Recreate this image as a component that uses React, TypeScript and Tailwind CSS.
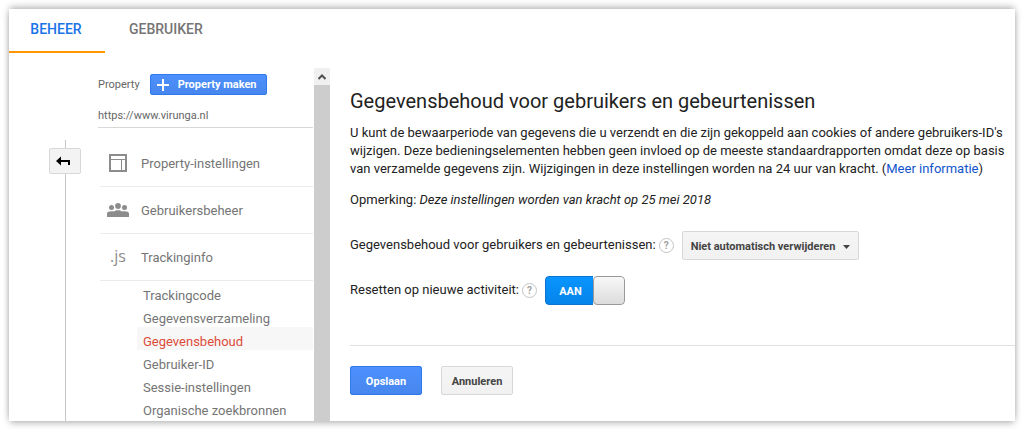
import React, { useState } from 'react';

const subItems = [
  'Trackingcode',
  'Gegevensverzameling',
  'Gegevensbehoud',
  'Gebruiker-ID',
  'Sessie-instellingen',
  'Organische zoekbronnen',
];

function LayoutIcon() {
  return (
    <svg width="18" height="18" viewBox="0 0 18 18" fill="none" stroke="#8c8c8c" aria-hidden="true">
      <rect x="1" y="1" width="16" height="16" strokeWidth="2" />
      <path d="M2 5.5h14M12.5 5.5V16" strokeWidth="1" />
    </svg>
  );
}

function PeopleIcon() {
  return (
    <svg width="22" height="14" viewBox="0 0 22 14" fill="#8c8c8c" aria-hidden="true">
      <circle cx="4.5" cy="4.5" r="2.5" />
      <circle cx="11" cy="3" r="2.9" />
      <circle cx="17.5" cy="4.5" r="2.5" />
      <path d="M0 14v-3.5C0 9 2 8.2 4.5 8.2c1 0 1.900.1 2.600.2C8 7.600 9.400 7.200 11 7.200s3 .4 3.900 1.200c.7-.1 1.600-.2 2.600-.2C20 8.200 22 9 22 10.500V14z" />
    </svg>
  );
}

function Help({ label }: { label: string }) {
  return (
    <button
      type="button"
      aria-label={label}
      className="flex size-[15px] shrink-0 items-center justify-center rounded-full border border-[#c4c4c4] text-[10px] leading-none font-bold text-[#a0a0a0]"
    >
      ?
    </button>
  );
}

function NavItem({ icon, children }: { icon: React.ReactNode; children: React.ReactNode }) {
  return (
    <a href="#" className="ml-0.5 flex h-[47px] items-center border-b border-[#ebebeb] text-[13px] text-[#757575]">
      <span className="flex w-9 justify-center">{icon}</span>
      <span className="ml-[5px] pt-0.5">{children}</span>
    </a>
  );
}

export default function App() {
  const [on, setOn] = useState(true);

  return (
    <div className="flex min-h-screen bg-white pt-[9px] pr-2 pb-2 pl-[9px] font-['Roboto',sans-serif] text-[#222]">
      <div className="flex min-w-0 flex-1 flex-col bg-white shadow-[0_-3px_7px_-1px_rgba(0,0,0,0.28),0_3px_7px_-1px_rgba(0,0,0,0.28)]">
        <nav className="flex h-11 text-sm font-medium">
          <a
            href="#"
            className="flex w-24 items-center justify-center border-b-2 border-[#ff9800] pr-0.5 pb-0.5 text-[#1a73e8]"
          >
            BEHEER
          </a>
          <a href="#" className="flex items-center border-b-2 border-transparent px-6 pb-0.5 text-[#757575]">
            GEBRUIKER
          </a>
        </nav>

        <div className="mt-[15px] flex flex-1">
          <div className="ml-10 flex w-8 shrink-0 flex-col pt-[72px]">
            <div className="ml-4 h-2 w-px bg-[#c6c6c6]" />
            <button
              type="button"
              aria-label="Terug"
              className="flex h-[26px] items-center justify-center rounded-xs border border-[#d8d8d8] bg-[#f3f3f3] pr-1"
            >
              <svg width="14" height="10" viewBox="0 0 14 10" aria-hidden="true">
                <path d="M0 5l5-4.500V4h9v5h-2V6H5v3.500z" fill="#000" />
              </svg>
            </button>
            <div className="ml-4 w-px flex-1 bg-[#c6c6c6]" />
          </div>

          <aside className="ml-[17px] w-[215px] shrink-0">
            <div className="flex items-center gap-2.5 pt-1.5 text-[11px] text-[#666]">
              <span className="pt-0.5">Property</span>
              <button
                type="button"
                className="flex h-[21px] items-center gap-[9px] rounded-xs border border-[#3079ed] bg-linear-to-b from-[#4d90fe] to-[#4787ed] pr-[9px] pl-1.5 font-bold text-white"
              >
                <svg width="12" height="12" viewBox="0 0 12 12" stroke="#fff" strokeWidth="2" aria-hidden="true">
                  <path d="M6 0v12M0 6h12" />
                </svg>
                <span className="pt-0.5">Property maken</span>
              </button>
            </div>
            <div className="mt-2 flex h-[25px] items-center border-b border-[#d8d8d8] pt-0.5 text-[11px] text-[#666]">
              https://www.virunga.nl
            </div>
            <nav className="pt-3">
              <NavItem icon={<LayoutIcon />}>Property-instellingen</NavItem>
              <NavItem icon={<PeopleIcon />}>Gebruikersbeheer</NavItem>
              <NavItem icon={<span className="pb-0.5 font-['Open_Sans',sans-serif] text-base text-[#8c8c8c]">.js</span>}>
                Trackinginfo
              </NavItem>
              <ul className="ml-[39px] text-[13px] leading-[17px]">
                {subItems.map((item) => (
                  <li key={item}>
                    <a
                      href="#"
                      className={
                        item === 'Gegevensbehoud'
                          ? 'block bg-[#f7f7f7] pt-1.5 pl-1.5 text-[#dd4b39]'
                          : 'block pt-1.5 pl-1.5 text-[#757575]'
                      }
                    >
                      {item}
                    </a>
                  </li>
                ))}
              </ul>
            </nav>
          </aside>

          <div className="ml-px flex w-4 shrink-0 flex-col bg-[#cdcdcd]">
            <div className="flex h-[17px] items-center justify-center bg-[#f0f0f0]">
              <svg width="8" height="6" viewBox="0 0 8 6" fill="none" stroke="#505050" strokeWidth="2" aria-hidden="true">
                <path d="M.5 5L4 1.500 7.500 5" />
              </svg>
            </div>
          </div>

          <main className="min-w-0 flex-1 pt-5 pl-5 text-[13px] leading-[18px]">
            <h1 className="text-xl leading-[26px]">Gegevensbehoud voor gebruikers en gebeurtenissen</h1>
            <p className="mt-2.5 pr-2">
              U kunt de bewaarperiode van gegevens die u verzendt en die zijn gekoppeld aan cookies of andere
              gebruikers-ID's wijzigen. Deze bedieningselementen hebben geen invloed op de meeste standaardrapporten
              omdat deze op basis van verzamelde gegevens zijn. Wijzigingen in deze instellingen worden na 24 uur van
              kracht. (
              <a href="#" className="text-[#1155cc]">
                Meer informatie
              </a>
              )
            </p>
            <p className="mt-[13px]">
              Opmerking: <em>Deze instellingen worden van kracht op 25 mei 2018</em>
            </p>

            <div className="mt-[22px] flex h-[29px] items-center">
              <label htmlFor="retention" className="pb-0.5">
                Gegevensbehoud voor gebruikers en gebeurtenissen:
              </label>
              <span className="ml-[3px] flex">
                <Help label="Hulp bij gegevensbehoud" />
              </span>
              <div className="relative ml-2">
                <select
                  id="retention"
                  className="h-[29px] w-[177px] appearance-none rounded-xs border border-[#d8d8d8] bg-linear-to-b from-[#f5f5f5] to-[#f1f1f1] pt-0.5 pl-2 text-[11px] font-bold text-[#444]"
                >
                  <option>Niet automatisch verwijderen</option>
                </select>
                <svg
                  width="7"
                  height="4"
                  viewBox="0 0 7 4"
                  className="pointer-events-none absolute top-[14px] right-[9px]"
                  aria-hidden="true"
                >
                  <path d="M0 0h7L3.500 4z" fill="#444" />
                </svg>
              </div>
            </div>

            <div className="mt-4 flex h-[29px] items-center">
              <label htmlFor="reset" className="pb-0.5">
                Resetten op nieuwe activiteit:
              </label>
              <span className="ml-[3px] flex">
                <Help label="Hulp bij resetten" />
              </span>
              <label className="ml-2 flex h-[29px] w-20 cursor-pointer overflow-hidden rounded-sm text-[11px] font-bold">
                <input
                  id="reset"
                  type="checkbox"
                  checked={on}
                  onChange={() => setOn(!on)}
                  className="sr-only"
                />
                <span
                  className={
                    on
                      ? 'flex flex-1 items-center justify-center rounded-l-sm border border-r-0 border-[#0b74cf] bg-linear-to-b from-[#0a95ff] to-[#0584ea] pt-0.5 pl-0.5 text-white'
                      : 'order-2 flex flex-1 items-center justify-center rounded-r-sm border border-l-0 border-[#999] bg-[#eee] pt-0.5 text-[#666]'
                  }
                >
                  {on ? 'AAN' : 'UIT'}
                </span>
                <span className="w-8 rounded-sm border border-[#999] bg-linear-to-b from-[#f8f8f8] to-[#dcdcdc]" />
              </label>
            </div>

            <hr className="mt-10 border-[#e0e0e0]" />
            <div className="mt-5 flex gap-[19px] text-[11px] font-bold">
              <button
                type="button"
                className="h-[29px] w-[72px] rounded-xs border border-[#3079ed] bg-linear-to-b from-[#4d90fe] to-[#4787ed] pt-0.5 text-white"
              >
                Opslaan
              </button>
              <button
                type="button"
                className="h-[29px] w-[72px] rounded-xs border border-[#d8d8d8] bg-linear-to-b from-[#f5f5f5] to-[#f1f1f1] pt-0.5 text-[#444]"
              >
                Annuleren
              </button>
            </div>
          </main>
        </div>
      </div>
    </div>
  );
}
